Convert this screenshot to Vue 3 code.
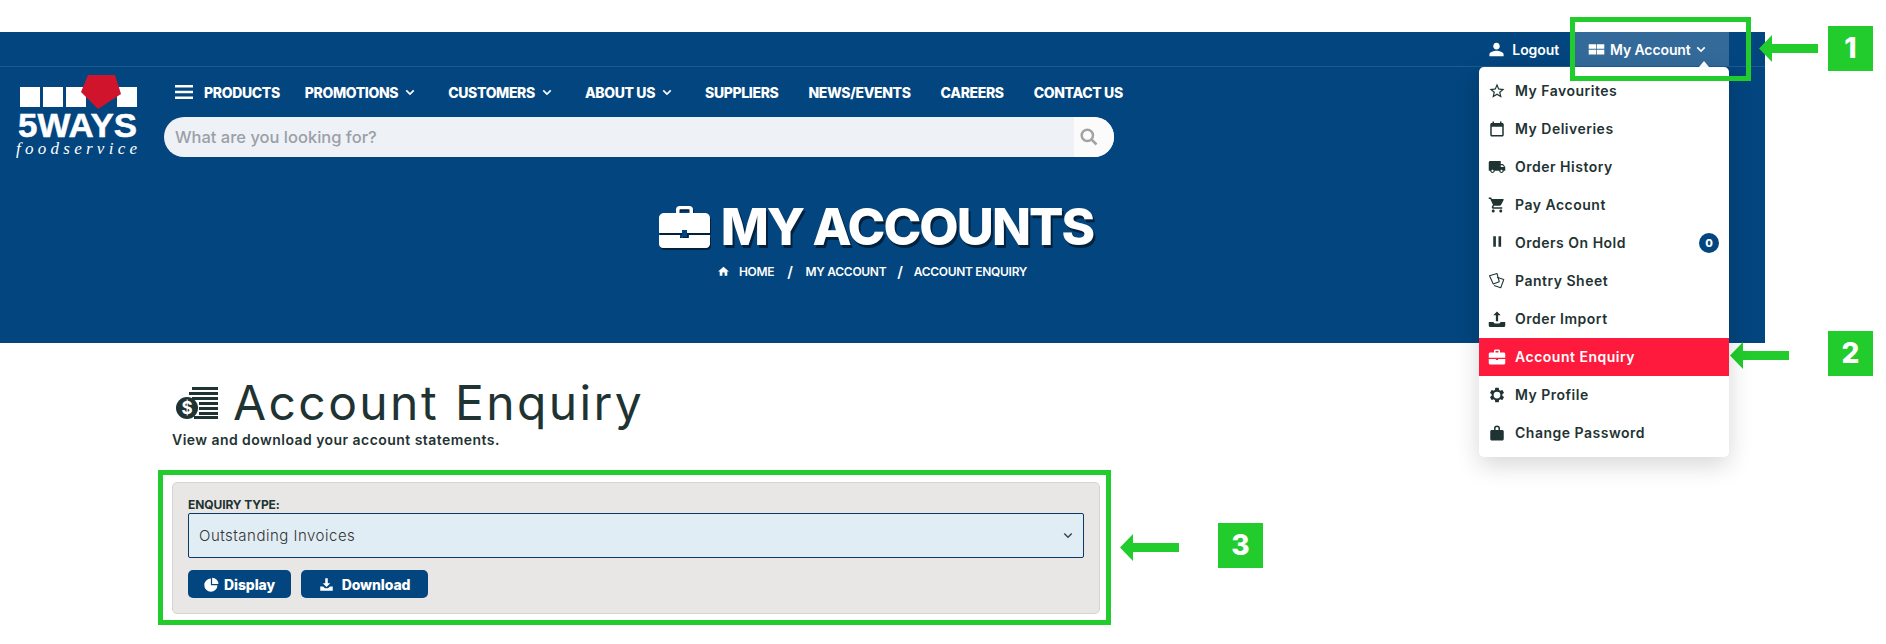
<template>
  <div class="page">
    <header class="site-header">
      <div class="topbar">
        <a class="top-link">
          <svg class="top-icon" viewBox="0 0 24 24"><path d="M12 12c2.900 0 4.600-2 4.600-4.600S14.900 2.500 12 2.500 7.400 4.800 7.400 7.400 9.100 12 12 12zm0 1.800c-3.400 0-10 1.700-10 5v2.700h20v-2.700c0-3.300-6.600-5-10-5z" /></svg>
          Logout
        </a>
        <div class="account-tab">
          <svg class="top-icon" viewBox="0 0 24 24"><path d="M1 4.500h10.500v6.500H1zM12.500 4.500H23v6.500H12.500zM1 12.500h10.500V19H1zM12.500 12.500H23V19H12.500z" /></svg>
          My Account
          <svg class="chev" viewBox="0 0 12 8"><path d="M1.500 1.500 6 6l4.500-4.500" /></svg>
          <span class="notch"></span>
          <div class="account-menu">
            <div
              v-for="item in menuItems"
              :key="item.label"
              class="menu-row"
              :class="{ active: item.active }"
            >
              <svg class="menu-icon" viewBox="0 0 24 24" v-html="item.icon"></svg>
              <span>{{ item.label }}</span>
              <span v-if="item.badge !== undefined" class="count">{{ item.badge }}</span>
            </div>
          </div>
        </div>
      </div>

      <div class="main-row">
        <svg class="logo" viewBox="0 0 125 90">
          <g fill="#fff">
            <rect x="5" y="12" width="20" height="20" />
            <rect x="28" y="12" width="20" height="20" />
            <rect x="51" y="12" width="20" height="20" />
            <rect x="102" y="12" width="20" height="20" />
          </g>
          <path d="M73 0h27l6 19-23 15-17-17z" fill="#d0142c" />
          <text x="3" y="62" class="logo-name" textLength="119" lengthAdjust="spacingAndGlyphs">5WAYS</text>
          <text x="1" y="79" class="logo-sub" textLength="121">foodservice</text>
        </svg>
        <div class="main-col">
          <nav class="nav">
            <svg class="burger" viewBox="0 0 18 14"><path d="M0 0h18v2.600H0zM0 5.700h18v2.600H0zM0 11.400h18V14H0z" /></svg>
            <a
              v-for="link in navLinks"
              :key="link.label"
              class="nav-link"
              :class="{ 'has-caret': link.caret }"
            >
              {{ link.label }}
              <svg v-if="link.caret" class="chev" viewBox="0 0 12 8"><path d="M1.500 1.500 6 6l4.500-4.500" /></svg>
            </a>
          </nav>
          <div class="search">
            <span class="search-text">What are you looking for?</span>
            <span class="search-btn">
              <svg viewBox="0 0 24 24"><circle cx="10" cy="10" r="6.800" /><path d="m15 15 6 6" /></svg>
            </span>
          </div>
        </div>
      </div>

      <div class="hero">
        <h1>
          <svg class="hero-icon" viewBox="0 0 51 42">
            <path d="M17 7V3.500C17 1.500 18.500 0 20.500 0h10C32.500 0 34 1.500 34 3.500V7h-3.500V4a.8.8 0 0 0-.8-.8h-8.400a.8.8 0 0 0-.8.8v3z" fill="#fff" />
            <path d="M5 7h41c2.800 0 5 2.200 5 5v15H0V12c0-2.800 2.200-5 5-5zM0 29h21v3h9v-3h21v9c0 2.200-1.800 4-4 4H4c-2.200 0-4-1.800-4-4z" fill="#fff" />
            <path d="M23 24h5v7h-5z" fill="#03457e" />
          </svg>
          <span>MY ACCOUNTS</span>
        </h1>
        <div class="crumbs">
          <svg class="crumb-home" viewBox="0 0 24 24"><path d="M10 20v-6h4v6h5v-8h3L12 3 2 12h3v8z" /></svg>
          <span>HOME</span>
          <span class="sep sep-a">/</span>
          <span>MY ACCOUNT</span>
          <span class="sep sep-b">/</span>
          <span>ACCOUNT ENQUIRY</span>
        </div>
      </div>
    </header>

    <main class="content">
      <div class="heading">
        <svg class="heading-icon" viewBox="0 0 42 32">
          <g fill="#1f3333">
            <rect x="16" y="0" width="26" height="3" />
            <rect x="13" y="5" width="29" height="3" />
            <rect x="16" y="10" width="26" height="3" />
            <rect x="23" y="15" width="19" height="3" />
            <rect x="23" y="20" width="19" height="3" />
            <rect x="23" y="25" width="19" height="3" />
            <rect x="18" y="29" width="24" height="3" />
            <circle cx="11" cy="21" r="11" />
          </g>
          <text x="11" y="27" class="dollar">$</text>
        </svg>
        <h2>Account Enquiry</h2>
      </div>
      <p class="lead">View and download your account statements.</p>

      <section class="card">
        <label class="field-label">ENQUIRY TYPE:</label>
        <div class="select">
          <span>Outstanding Invoices</span>
          <svg class="select-chev" viewBox="0 0 12 8"><path d="M1.500 1.500 6 6l4.500-4.500" /></svg>
        </div>
        <div class="actions">
          <button class="btn btn-display">
            <svg viewBox="0 0 24 24"><path d="M11 2.500v10.500h10.500A10.500 10.500 0 1 1 11 2.500zM13 1a10 10 0 0 1 10 10H13z" fill="#fff" /></svg>
            Display
          </button>
          <button class="btn btn-download">
            <svg viewBox="0 0 24 24"><path d="M10 2h4v8h4l-6 6-6-6h4zM2 15h4.500l3 3h5l3-3H22v7H2z" fill="#fff" /></svg>
            Download
          </button>
        </div>
      </section>
    </main>

    <!-- callouts drawn on top of the screenshot -->
    <div class="callout-box box-1"></div>
    <div class="callout-box box-3"></div>
    <svg class="arrow arrow-1" viewBox="0 0 59 27"><path d="M0 13.500 13 0v9h46v9H13v9z" /></svg>
    <svg class="arrow arrow-2" viewBox="0 0 59 27"><path d="M0 13.500 13 0v9h46v9H13v9z" /></svg>
    <svg class="arrow arrow-3" viewBox="0 0 59 27"><path d="M0 13.500 13 0v9h46v9H13v9z" /></svg>
    <div class="tag tag-1">1</div>
    <div class="tag tag-2">2</div>
    <div class="tag tag-3">3</div>
  </div>
</template>

<script setup>
const navLinks = [
  { label: 'PRODUCTS' },
  { label: 'PROMOTIONS', caret: true },
  { label: 'CUSTOMERS', caret: true },
  { label: 'ABOUT US', caret: true },
  { label: 'SUPPLIERS' },
  { label: 'NEWS/EVENTS' },
  { label: 'CAREERS' },
  { label: 'CONTACT US' }
]

const menuItems = [
  {
    label: 'My Favourites',
    icon: '<path d="M22 9.240l-7.190-.620L12 2 9.190 8.630 2 9.240l5.460 4.730L5.820 21 12 17.270 18.180 21l-1.630-7.030L22 9.240zM12 15.400l-3.760 2.270 1-4.280-3.320-2.880 4.380-.380L12 6.100l1.710 4.040 4.380.380-3.320 2.880 1 4.280L12 15.400z"/>'
  },
  {
    label: 'My Deliveries',
    icon: '<path d="M19 4h-1V2h-2v2H8V2H6v2H5c-1.100 0-2 .9-2 2v14c0 1.100.9 2 2 2h14c1.100 0 2-.9 2-2V6c0-1.100-.9-2-2-2zm0 16H5V9h14v11z"/>'
  },
  {
    label: 'Order History',
    icon: '<path d="M20 8h-3V4H3c-1.100 0-2 .9-2 2v11h2c0 1.660 1.340 3 3 3s3-1.340 3-3h6c0 1.660 1.340 3 3 3s3-1.340 3-3h2v-5l-3-4zM6 18.500c-.83 0-1.500-.67-1.500-1.500s.67-1.500 1.500-1.500 1.500.67 1.500 1.500-.67 1.500-1.500 1.500zm13.500-9l1.960 2.500H17V9.500h2.500zm-1.500 9c-.83 0-1.500-.67-1.500-1.500s.67-1.500 1.500-1.500 1.500.67 1.500 1.500-.67 1.500-1.500 1.500z"/>'
  },
  {
    label: 'Pay Account',
    icon: '<path d="M7 18c-1.100 0-1.990.9-1.990 2S5.900 22 7 22s2-.9 2-2-.9-2-2-2zM1 2v2h2l3.600 7.590-1.350 2.450c-.16.280-.25.610-.25.960 0 1.100.9 2 2 2h12v-2H7.420c-.14 0-.25-.11-.25-.25l.03-.12.9-1.630h7.450c.75 0 1.410-.41 1.750-1.030l3.580-6.490c.08-.14.12-.31.12-.48 0-.55-.45-1-1-1H5.210l-.94-2H1zm16 16c-1.100 0-1.990.9-1.990 2s.89 2 1.990 2 2-.9 2-2-.9-2-2-2z"/>'
  },
  {
    label: 'Orders On Hold',
    badge: 0,
    icon: '<path d="M7 3h3.500v14H7zM14 3h3.500v14H14z"/>'
  },
  {
    label: 'Pantry Sheet',
    icon: '<g fill="none" stroke="currentColor" stroke-width="1.400" stroke-linejoin="round"><path d="m2 5 10-3 3 11-8 3z"/><path d="m12 7 9 3-4 11-9-3"/></g>'
  },
  {
    label: 'Order Import',
    icon: '<path d="M12 2l5 5h-3.500v8h-3V7H7zM1 16h6l2 2h6l2-2h6v4.500a2 2 0 0 1-2 2H3a2 2 0 0 1-2-2z"/>'
  },
  {
    label: 'Account Enquiry',
    active: true,
    icon: '<path d="M8 6V4c0-1.100.9-2 2-2h4c1.100 0 2 .9 2 2v2h-2V4h-4v2zM3 6h18c1.100 0 2 .9 2 2v5H1V8c0-1.100.9-2 2-2zM1 14.500h9.500V16h3v-1.500H23V20c0 1.100-.9 2-2 2H3c-1.100 0-2-.9-2-2z"/>'
  },
  {
    label: 'My Profile',
    icon: '<path d="M19.140 12.940c.04-.3.06-.61.06-.94 0-.32-.02-.64-.07-.94l2.030-1.580c.18-.14.23-.41.12-.61l-1.920-3.320c-.12-.22-.37-.29-.59-.22l-2.390.96c-.5-.38-1.030-.7-1.620-.94l-.36-2.540c-.04-.24-.24-.41-.48-.41h-3.840c-.24 0-.43.170-.47.410l-.36 2.540c-.59.240-1.130.570-1.620.940l-2.390-.96c-.22-.08-.47 0-.59.220L2.740 8.870c-.12.210-.08.470.12.610l2.030 1.580c-.05.3-.09.630-.09.940s.02.640.07.940l-2.030 1.580c-.18.140-.23.410-.12.610l1.920 3.320c.12.220.37.290.59.220l2.390-.96c.5.380 1.030.7 1.620.94l.36 2.540c.05.240.24.410.48.410h3.840c.24 0 .44-.17.470-.41l.36-2.540c.59-.24 1.130-.56 1.620-.94l2.390.96c.22.080.47 0 .59-.22l1.920-3.320c.12-.22.070-.47-.12-.61l-2.010-1.580zM12 16.500a4.500 4.500 0 1 1 0-9 4.500 4.500 0 0 1 0 9z"/>'
  },
  {
    label: 'Change Password',
    icon: '<path d="M8 8V6a4 4 0 0 1 8 0v2h3c1.100 0 2 .9 2 2v10c0 1.100-.9 2-2 2H5c-1.100 0-2-.9-2-2V10c0-1.100.9-2 2-2zm2 0h4V6a2 2 0 0 0-4 0z"/>'
  }
]
</script>

<style>
html,
body {
  margin: 0;
  background: #fff;
}
</style>

<style scoped>
.page {
  position: relative;
  width: 1886px;
  height: 644px;
  box-sizing: border-box;
  padding-top: 32px;
  overflow: hidden;
  background: #fff;
  color: #1f3333;
  font-family: Inter, 'Open Sans', sans-serif;
}

.site-header {
  width: 1765px;
  height: 311px;
  background: #03457e;
  color: #fff;
}

.topbar {
  display: flex;
  justify-content: flex-end;
  align-items: stretch;
  height: 34px;
  padding-right: 36px;
  border-bottom: 1px solid #1e5a8e;
  font-size: 14px;
  font-weight: 600;
  letter-spacing: -0.1px;
}

.top-link {
  display: flex;
  align-items: center;
  gap: 7px;
  margin-right: 14px;
}

.top-icon {
  width: 17px;
  height: 17px;
  fill: #fff;
}

.chev {
  width: 10px;
  height: 7px;
  fill: none;
  stroke: #fff;
  stroke-width: 2;
}

.account-tab {
  position: relative;
  display: flex;
  align-items: center;
  gap: 5px;
  width: 156px;
  box-sizing: border-box;
  padding-left: 15px;
  background: #336a99;
}

.notch {
  position: absolute;
  right: 20px;
  top: 29px;
  width: 0;
  height: 0;
  border-left: 5px solid transparent;
  border-right: 5px solid transparent;
  border-bottom: 6px solid #fff;
}

.account-menu {
  position: absolute;
  z-index: 2;
  top: 35px;
  right: 0;
  width: 250px;
  padding: 5px 0;
  background: #fff;
  border-radius: 5px;
  box-shadow: 0 8px 24px rgba(0, 0, 0, 0.16);
  color: #1f3333;
}

.menu-row {
  display: flex;
  align-items: center;
  height: 38px;
  box-sizing: border-box;
  padding: 0 10px 1px 9px;
  font-size: 14px;
  font-weight: 600;
  letter-spacing: 0.5px;
}

.menu-row.active {
  background: #fe1a3c;
  color: #fff;
}

.menu-icon {
  width: 18px;
  height: 18px;
  margin-right: 9px;
  fill: currentColor;
}

.count {
  width: 20px;
  height: 20px;
  margin-left: auto;
  border-radius: 50%;
  background: #03457e;
  color: #fff;
  font-size: 11px;
  font-weight: 800;
  letter-spacing: 0;
  line-height: 20px;
  text-align: center;
}

.main-row {
  display: flex;
  align-items: flex-start;
}

.logo {
  width: 125px;
  height: 90px;
  margin: 8px 0 0 15px;
  flex: none;
  overflow: visible;
}

.logo-name {
  font-family: 'Liberation Sans', Arial, sans-serif;
  font-size: 33px;
  font-weight: 700;
  fill: #fff;
  stroke: #fff;
  stroke-width: 0.5px;
}

.logo-sub {
  font-family: 'Liberation Serif', 'Times New Roman', serif;
  font-size: 17px;
  font-style: italic;
  fill: #fff;
}

.main-col {
  margin-left: 24px;
}

.nav {
  display: flex;
  align-items: center;
  height: 50px;
  padding-left: 11px;
}

.burger {
  width: 18px;
  height: 14px;
  margin-right: 11px;
  fill: #fff;
}

.nav-link {
  display: flex;
  align-items: center;
  gap: 7px;
  margin-right: 30px;
  font-size: 14px;
  font-weight: 800;
  letter-spacing: -0.36px;
  white-space: nowrap;
}

.nav-link:first-of-type {
  margin-right: 25px;
}

.nav-link.has-caret {
  margin-right: 33px;
}

.search {
  display: flex;
  align-items: stretch;
  width: 950px;
  height: 40px;
  border-radius: 20px;
  overflow: hidden;
  background: #eef1f6;
}

.search-text {
  flex: 1;
  padding-left: 11px;
  font-size: 16.500px;
  font-weight: 500;
  line-height: 40px;
  color: #9a9fa8;
}

.search-btn {
  display: flex;
  align-items: center;
  width: 40px;
  box-sizing: border-box;
  padding-left: 5px;
  background: #fbfbfb;
}

.search-btn svg {
  width: 20px;
  height: 20px;
  fill: none;
  stroke: #a3a3a3;
  stroke-width: 3;
}

.hero {
  padding-right: 13px;
  margin-top: 32px;
}

h1 {
  display: flex;
  justify-content: center;
  align-items: center;
  gap: 11px;
  height: 60px;
  margin: 0;
  font-size: 51px;
  font-weight: 800;
  line-height: 60px;
  letter-spacing: -1.95px;
  text-shadow: 2px 3px 0 #02213d;
}

.hero-icon {
  width: 51px;
  height: 42px;
  filter: drop-shadow(1px 2px 0 #02213d);
}

.crumbs {
  display: flex;
  justify-content: center;
  align-items: center;
  margin-top: 5px;
  padding-right: 8px;
  font-size: 12px;
  font-weight: 600;
  letter-spacing: -0.3px;
}

.crumb-home {
  width: 13px;
  height: 13px;
  margin-right: 9px;
  fill: #fff;
}

.sep {
  font-size: 15px;
  margin: 0 13px;
}

.sep-b {
  margin: 0 11px;
}

.content {
  padding: 35px 0 0 172px;
}

.heading {
  display: flex;
  align-items: center;
  gap: 15px;
  height: 50px;
  padding-left: 4px;
}

.heading-icon {
  width: 42px;
  height: 32px;
  flex: none;
}

.dollar {
  font-size: 17px;
  font-weight: 700;
  fill: #fff;
  text-anchor: middle;
}

h2 {
  margin: 0;
  font-size: 48px;
  font-weight: 400;
  line-height: 50px;
  letter-spacing: 2.4px;
  color: #1f3333;
}

.lead {
  margin: 2px 0 0;
  font-size: 14px;
  font-weight: 600;
  line-height: 20px;
  letter-spacing: 0.45px;
}

.card {
  width: 928px;
  height: 132px;
  margin-top: 32px;
  box-sizing: border-box;
  padding: 14px 15px 0;
  border: 1px solid #d6d4d2;
  border-radius: 5px;
  background: #e9e7e5;
}

.field-label {
  display: block;
  height: 16px;
  font-size: 12px;
  font-weight: 700;
  line-height: 16px;
  letter-spacing: -0.1px;
}

.select {
  display: flex;
  align-items: center;
  justify-content: space-between;
  width: 896px;
  height: 45px;
  box-sizing: border-box;
  padding: 0 10px;
  border: 1px solid #0a3a63;
  border-radius: 2px;
  background: #e1edf5;
  font-size: 15px;
  font-weight: 300;
  letter-spacing: 0.5px;
  color: #333;
}

.select-chev {
  width: 10px;
  height: 7px;
  fill: none;
  stroke: #444;
  stroke-width: 1.800;
}

.actions {
  display: flex;
  gap: 10px;
  margin-top: 12px;
}

.btn {
  display: flex;
  align-items: center;
  justify-content: center;
  height: 28px;
  padding: 0;
  border: 0;
  border-radius: 5px;
  background: #03457e;
  color: #fff;
  font-family: inherit;
  font-size: 14px;
  font-weight: 800;
  letter-spacing: -0.1px;
}

.btn svg {
  width: 15px;
  height: 15px;
}

.btn-display {
  width: 103px;
  gap: 5px;
}

.btn-download {
  width: 127px;
  gap: 8px;
}

.callout-box {
  position: absolute;
  box-sizing: border-box;
  border: 5px solid #22cc2c;
  pointer-events: none;
}

.box-1 {
  left: 1570px;
  top: 17px;
  width: 181px;
  height: 64px;
  z-index: 3;
}

.box-3 {
  left: 158px;
  top: 470px;
  width: 953px;
  height: 155px;
}

.arrow {
  position: absolute;
  width: 59px;
  height: 27px;
  fill: #22cc2c;
}

.arrow-1 {
  left: 1759px;
  top: 35px;
}

.arrow-2 {
  left: 1730px;
  top: 342px;
}

.arrow-3 {
  left: 1120px;
  top: 534px;
}

.tag {
  position: absolute;
  left: 1828px;
  width: 45px;
  height: 45px;
  background: #22cc2c;
  color: #fff;
  font-size: 28px;
  font-weight: 800;
  line-height: 45px;
  text-align: center;
}

.tag-1 {
  top: 26px;
}

.tag-2 {
  top: 331px;
}

.tag-3 {
  left: 1218px;
  top: 523px;
}
</style>
